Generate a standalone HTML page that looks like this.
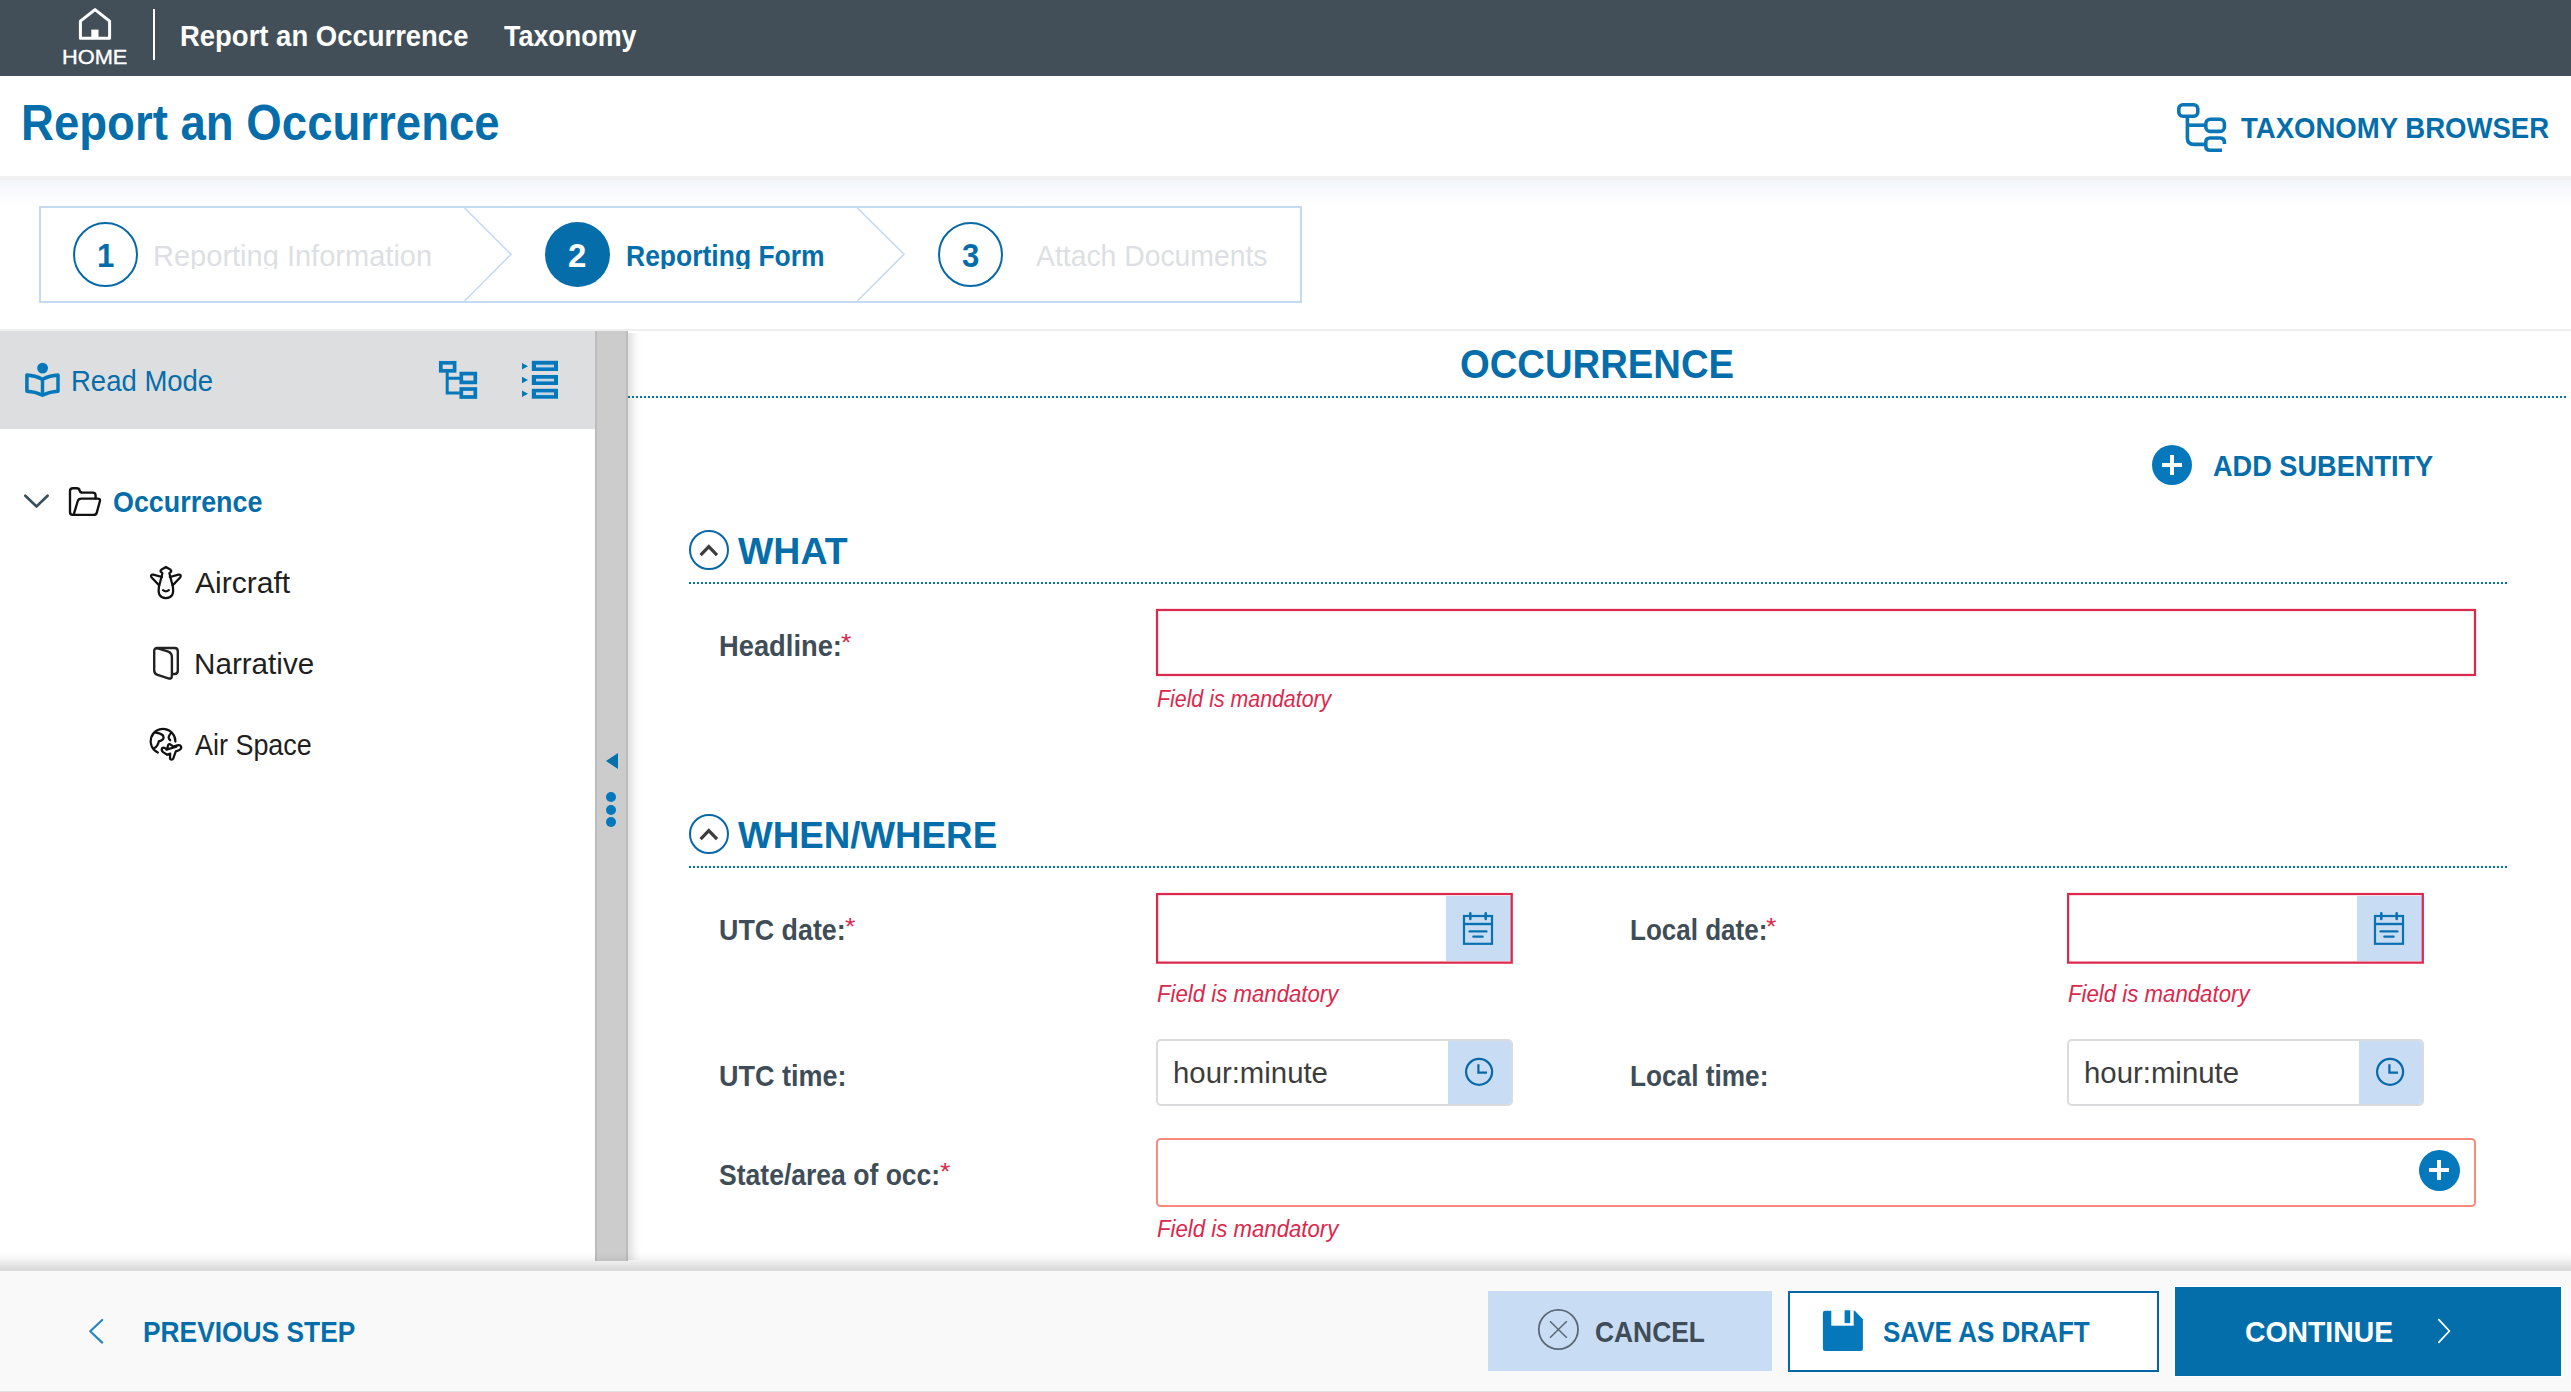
<!DOCTYPE html>
<html lang="en"><head><meta charset="utf-8"><title>Report an Occurrence</title>
<style>
html,body{margin:0;padding:0;}
body{width:2571px;height:1392px;overflow:hidden;background:#fff;position:relative;font-family:"Liberation Sans",sans-serif;}
.a{position:absolute;box-sizing:border-box;}
.t{position:absolute;white-space:nowrap;line-height:1;transform-origin:0 0;display:block;font-family:"Liberation Sans",sans-serif;}
svg{position:absolute;left:0;top:0;overflow:visible;}
.dot{position:absolute;height:2px;background-image:linear-gradient(90deg,#0670ab 0,#0670ab 2px,transparent 2px,transparent 4px);background-size:4px 2px;}

</style></head>
<body>
<!-- nav -->
<div class="a" style="left:0;top:0;width:2571px;height:75.5px;background:#424f59;"></div>
<div class="a" style="left:153px;top:9px;width:2.3px;height:51px;background:#fff;"></div>
<!-- title bar shadow -->
<div class="a" style="left:0;top:176px;width:2571px;height:4px;background:#f1f1f1;"></div>
<div class="a" style="left:0;top:180px;width:2571px;height:26px;background:linear-gradient(#f2f6fb,#fff);"></div>
<!-- stepper -->
<div class="a" style="left:39px;top:206px;width:1263px;height:97px;border:2px solid #c3daf1;background:#fff;"></div>
<div class="a" style="left:73px;top:222px;width:65px;height:65px;border-radius:50%;border:2.4px solid #0668a6;"></div>
<div class="a" style="left:544.5px;top:222px;width:65px;height:65px;border-radius:50%;background:#056eaa;"></div>
<div class="a" style="left:938px;top:222px;width:65px;height:65px;border-radius:50%;border:2.4px solid #0668a6;"></div>
<!-- separator line -->
<div class="a" style="left:0;top:329px;width:2571px;height:2px;background:#efefef;"></div>
<!-- left panel -->
<div class="a" style="left:0;top:331px;width:595px;height:97.5px;background:#dddee0;"></div>
<!-- splitter -->
<div class="a" style="left:595px;top:331px;width:33px;height:929.5px;background:#cccccc;border-left:2px solid #bcbcbc;border-right:2px solid #bcbcbc;"></div>
<div class="a" style="left:628px;top:333px;width:14px;height:927px;background:linear-gradient(90deg,rgba(0,0,0,.105),rgba(0,0,0,.09) 18%,rgba(0,0,0,.04) 50%,rgba(0,0,0,.012) 75%,rgba(0,0,0,0));"></div>
<div class="a" style="left:606px;top:792.4px;width:10px;height:10px;border-radius:50%;background:#0478ba;"></div>
<div class="a" style="left:606px;top:804.8px;width:10px;height:10px;border-radius:50%;background:#0478ba;"></div>
<div class="a" style="left:606px;top:817.2px;width:10px;height:10px;border-radius:50%;background:#0478ba;"></div>
<!-- dotted lines -->
<div class="dot" style="left:628px;top:395.7px;width:1939px;"></div>
<div class="dot" style="left:689px;top:582px;width:1818px;"></div>
<div class="dot" style="left:689px;top:866px;width:1818px;"></div>
<!-- section circles -->
<div class="a" style="left:689px;top:530px;width:40px;height:40px;border-radius:50%;border:2px solid #0668a6;"></div>
<div class="a" style="left:689px;top:814px;width:40px;height:40px;border-radius:50%;border:2px solid #0668a6;"></div>
<!-- plus circles -->
<div class="a" style="left:2152px;top:445px;width:40px;height:40px;border-radius:50%;background:#0478ba;"></div>
<div class="a" style="left:2162px;top:463px;width:20px;height:4px;background:#fff;"></div>
<div class="a" style="left:2170px;top:455px;width:4px;height:20px;background:#fff;"></div>
<!-- inputs -->


<div class="a" style="left:1446px;top:896px;width:65px;height:65px;background:#c8dcf3;"></div>

<div class="a" style="left:2357px;top:896px;width:65px;height:65px;background:#c8dcf3;"></div>
<div class="a" style="left:1156px;top:1039px;width:357px;height:67px;border:2px solid #d9dbdd;border-radius:5px;background:#fff;"></div>
<div class="a" style="left:1448px;top:1041px;width:63px;height:63px;background:#c8dcf3;border-radius:0 3px 3px 0;"></div>
<div class="a" style="left:2067px;top:1039px;width:357px;height:67px;border:2px solid #d9dbdd;border-radius:5px;background:#fff;"></div>
<div class="a" style="left:2359px;top:1041px;width:63px;height:63px;background:#c8dcf3;border-radius:0 3px 3px 0;"></div>
<div class="a" style="left:1156px;top:1138px;width:1320px;height:69px;border:2px solid #f98a7b;border-radius:4.5px;background:#fff;"></div>
<div class="a" style="left:2418.7px;top:1149.6px;width:41.4px;height:41.4px;border-radius:50%;background:#0478ba;"></div>
<div class="a" style="left:2429.4px;top:1168.3px;width:20px;height:4px;background:#fff;"></div>
<div class="a" style="left:2437.4px;top:1160.3px;width:4px;height:20px;background:#fff;"></div>
<!-- footer -->
<div class="a" style="left:0;top:1251px;width:2571px;height:17px;background:linear-gradient(rgba(0,0,0,0),rgba(0,0,0,.012) 25%,rgba(0,0,0,.05) 53%,rgba(0,0,0,.10) 82%,rgba(0,0,0,.137));"></div>
<div class="a" style="left:0;top:1268px;width:2571px;height:3px;background:#dcdcdc;"></div>
<div class="a" style="left:0;top:1271px;width:2571px;height:121px;background:#f9f9f9;border-bottom:1px solid #e2e2e2;"></div>
<div class="a" style="left:1488px;top:1291px;width:284px;height:80px;background:#c8dcf3;"></div>
<div class="a" style="left:1788px;top:1291px;width:370.5px;height:81px;border:2.5px solid #0566a6;background:#fff;"></div>
<div class="a" style="left:2175px;top:1287px;width:386px;height:88.5px;background:#046eaa;outline:1px solid #fff;"></div>

<svg width="2571" height="1392" viewBox="0 0 2571 1392" fill="none">
<!-- home -->
<g stroke="#fff" stroke-width="3" stroke-linejoin="round" stroke-linecap="round">
<path d="M80.4 21.2 L95 9.6 L109.6 21.2 V38.2 H80.4 Z"/>
</g>
<rect x="91.3" y="29.6" width="7.2" height="9" fill="#fff"/>
<!-- taxonomy browser icon -->
<g stroke="#0a76b6" stroke-width="3.6" stroke-linecap="butt" stroke-linejoin="round">
<rect x="2178.8" y="104.8" width="19" height="11.4" rx="4"/>
<rect x="2205.8" y="119.2" width="18.6" height="12.2" rx="4.5"/>
<path d="M2187.4 118 V138 Q2187.4 144.4 2194 144.4 H2205"/>
<path d="M2187.4 125.2 H2205"/>
<path d="M2224.4 144 V142.5 Q2224.4 138 2220 138 H2210 Q2205.8 138 2205.8 142.5 V145.7 Q2205.8 150.2 2210 150.2 H2222"/>
</g>
<!-- read mode icon -->
<circle cx="42.6" cy="368.1" r="5.4" fill="#0478ba"/>
<g stroke="#0478ba" stroke-width="3.5" stroke-linejoin="round">
<path d="M42.5 379.2 Q35 375.3 26.9 375 V391.3 Q35 391.6 42.5 395.3 Q50 391.6 58 391.3 V375 Q50 375.3 42.5 379.2 Z"/>
<path d="M42.5 379.2 V395.3"/>
</g>
<!-- tree icon -->
<g stroke="#0478ba" stroke-width="3.7">
<rect x="440.8" y="362.8" width="13.8" height="8"/>
<rect x="461.3" y="373.6" width="14" height="8.8"/>
<rect x="461.3" y="389" width="14" height="8"/>
<path d="M447.2 372 V393 H461 M447.2 378.3 H461" stroke-width="3"/>
</g>
<!-- list icon -->
<g fill="#0478ba">
<rect x="531.8" y="360.8" width="26.2" height="10.2"/>
<rect x="531.8" y="375" width="26.2" height="10"/>
<rect x="531.8" y="388.8" width="26.2" height="9.9"/>
</g>
<g fill="#c3d6e5">
<rect x="536" y="364.7" width="18" height="2.7"/>
<rect x="536" y="378.7" width="18" height="2.7"/>
<rect x="536" y="392.4" width="18" height="2.7"/>
</g>
<g fill="#0478ba">
<path d="M522 363 L528 366.2 L522 369.4Z M522 376.8 L528 380 L522 383.2Z M522 390.6 L528 393.8 L522 397Z"/>
</g>
<!-- chevron down -->
<path d="M25.3 495.8 L36.5 506.5 L47.6 495.8" stroke="#3a4f5c" stroke-width="2.7" stroke-linecap="round" stroke-linejoin="miter"/>
<!-- folder -->
<g stroke="#111" stroke-width="2.35" stroke-linejoin="round" stroke-linecap="round">
<path d="M73.6 514.9 H72.8 Q70 514.9 70 512 V491 Q70 488.2 72.8 488.2 H76.5 Q79.3 488.2 79.6 490.5 Q79.9 492.6 82.5 492.6 H92.8 Q95.6 492.6 95.6 495.4 V498.4"/>
<path d="M73.6 514.9 L77.8 501 Q78.6 498.6 81.2 498.6 H97.6 Q100.6 498.6 99.8 501.5 L96.8 512.6 Q96.2 514.9 93.6 514.9 Z"/>
</g>
<!-- aircraft -->
<g stroke="#111" stroke-width="2.25" stroke-linejoin="round" stroke-linecap="round">
<path d="M165.9 567 L170.6 569.8 Q172 570.8 170.6 572.2 L169.4 573.2 L172.8 586.5 Q174.8 598 165.9 598 Q157 598 159 586.5 L162.4 573.2 L161.2 572.2 Q159.8 570.8 161.2 569.8 Z"/>
<path d="M162 577 L153.2 574.6 Q150.2 574.2 151.4 577.2 L159.2 585.4"/>
<path d="M169.8 577 L178.6 574.6 Q181.6 574.2 180.4 577.2 L172.6 585.4"/>
<path d="M163 590.2 Q165.9 592.4 168.8 590.2"/>
</g>
<!-- narrative -->
<g stroke="#222" stroke-width="2.4" stroke-linejoin="round" stroke-linecap="round">
<path d="M156.5 648 H174.6 Q177.8 648 177.8 651.2 V670.8 Q177.8 674 174.6 674 H172.2"/>
<path d="M154.2 651.2 Q154.2 647.6 157.6 648.4 L167.6 651.4 Q171.9 652.8 171.9 657.2 V675.6 Q171.9 679.4 168.4 678.3 L157.6 674.8 Q154.2 673.6 154.2 670.4 Z"/>
</g>
<!-- air space -->
<g stroke="#111" stroke-width="2.25" stroke-linejoin="round" stroke-linecap="round">
<path d="M175.4 741.6 A12.4 12.4 0 1 0 157.8 752.6"/>
<path d="M154.8 732.4 Q160 733 162.6 735 Q165 738.4 161.6 740.4 L158.8 741.4 Q157.6 746.4 154.4 748"/>
<path d="M171.2 733 Q167.8 736.4 169 738.8 L170.2 740.2"/>
<path d="M162 748.4 Q163.4 747 165 748.2 L167.2 749 L168 745.4 Q169.2 743.2 171 744.8 L173.4 746.6 L177.2 745.4 Q180.4 744.6 181.2 746.8 Q181.6 749.2 179 750.2 L175.8 751.4 L173.2 758.6 Q171.8 760.6 170 758.8 L170.2 753.6 L167.2 754.8 L163.4 752.4 Q161 750.4 162 748.4 Z"/>
<path d="M166.4 749.6 L176.4 746.6"/>
</g>
<!-- splitter arrow -->
<path d="M606 761 L618 753 V769 Z" fill="#0670ab"/>
<!-- section chevrons -->
<g stroke="#3d3d3d" stroke-width="3.2" stroke-linecap="butt" stroke-linejoin="miter">
<path d="M700.6 555.2 L708.8 546.6 L717 555.2"/>
<path d="M700.6 839.2 L708.8 830.6 L717 839.2"/>
</g>
<!-- red input borders -->
<g stroke="#db2a4e" stroke-width="2.25">
<rect x="1157.03" y="609.98" width="1317.95" height="65"/>
<rect x="1157.1" y="894.03" width="354.6" height="68.6"/>
<rect x="2068.1" y="894.03" width="354.7" height="68.6"/>
</g>
<!-- calendars -->
<g id="cal" stroke="#0a72b2" stroke-width="2.2" stroke-linecap="round">
<rect x="1464" y="916" width="28" height="27.8" stroke-linejoin="miter"/>
<path d="M1464 924 H1492" stroke-linecap="butt" stroke-width="2.4"/>
<path d="M1470.3 913.4 V919 M1485.7 913.4 V919" stroke-width="2.6"/>
<path d="M1469.6 931.4 H1486.4 M1473.4 936.6 H1482.6" stroke-width="2.4"/>
</g>
<use href="#cal" x="911" y="0"/>
<!-- clocks -->
<g id="clk" stroke="#0669a9" stroke-width="2.2">
<circle cx="1479.1" cy="1071.8" r="13"/>
<path d="M1478.4 1064.2 V1072.6 H1487"/>
</g>
<use href="#clk" x="911" y="0"/>
<!-- previous chevron -->
<path d="M102.2 1320 L90.2 1331.3 L102.2 1342.6" stroke="#2a84c0" stroke-width="2.2" stroke-linecap="round" stroke-linejoin="round"/>
<!-- cancel icon -->
<g stroke="#5a6874" stroke-width="1.8">
<circle cx="1558.4" cy="1329.5" r="19.6"/>
<path d="M1550 1321.3 L1566.8 1337.7 M1566.8 1321.3 L1550 1337.7" stroke-width="1.5"/>
</g>
<!-- floppy -->
<path d="M1825 1310.8 H1854.8 L1862.9 1319.2 V1348.8 Q1862.9 1351 1860.7 1351 H1825 Q1822.9 1351 1822.9 1348.8 V1313 Q1822.9 1310.8 1825 1310.8 Z" fill="#0478ba"/>
<rect x="1831.3" y="1310.3" width="22.4" height="15.4" fill="#fff"/>
<rect x="1844.6" y="1310.3" width="5.6" height="12.8" fill="#0478ba"/>
<!-- continue chevron -->
<path d="M2438.8 1319.6 L2449.4 1331 L2438.8 1342.4" stroke="#fff" stroke-width="1.8" stroke-linecap="round" stroke-linejoin="round"/>
<!-- stepper chevrons -->
<g stroke="#c4dbf1" stroke-width="1.6">
<path d="M464.6 208 L511 254.3 L464.6 301"/>
<path d="M857.4 208 L904 254.3 L857.4 301"/>
</g>
</svg>


<!-- text layer -->
<span class="t" style="left:62.24px;top:45px;line-height:23px;font-size:21px;color:#fff;transform:scaleX(1.0381);-webkit-text-stroke:0.35px #fff;">HOME</span>
<span class="t" style="left:180.28px;top:19px;line-height:33px;font-size:30px;color:#fff;transform:scaleX(0.9153);font-weight:700;">Report an Occurrence</span>
<span class="t" style="left:504.00px;top:19px;line-height:33px;font-size:30px;color:#fff;transform:scaleX(0.8967);font-weight:700;">Taxonomy</span>
<span class="t" style="left:20.95px;top:95px;line-height:56px;font-size:50px;color:#056eaa;transform:scaleX(0.9115);font-weight:700;">Report an Occurrence</span>
<span class="t" style="left:2240.70px;top:111px;line-height:33px;font-size:30px;color:#056eaa;transform:scaleX(0.9182);font-weight:700;">TAXONOMY BROWSER</span>
<span class="t" style="left:97.05px;top:237px;line-height:37px;font-size:33px;color:#056eaa;transform:scaleX(0.9438);font-weight:700;">1</span>
<span class="t" style="left:153.13px;top:239px;line-height:33px;font-size:30px;color:#dcdfe3;transform:scaleX(0.9675);height:29.6px;overflow:hidden;">Reporting Information</span>
<span class="t" style="left:567.97px;top:237px;line-height:37px;font-size:33px;color:#fff;transform:scaleX(1.0000);font-weight:700;">2</span>
<span class="t" style="left:626.04px;top:239px;line-height:33px;font-size:30px;color:#056eaa;transform:scaleX(0.8830);font-weight:700;height:29.6px;overflow:hidden;">Reporting Form</span>
<span class="t" style="left:962.02px;top:237px;line-height:37px;font-size:33px;color:#056eaa;transform:scaleX(0.9403);font-weight:700;">3</span>
<span class="t" style="left:1036.00px;top:239px;line-height:33px;font-size:30px;color:#dcdfe3;transform:scaleX(0.9444);height:29.6px;overflow:hidden;">Attach Documents</span>
<span class="t" style="left:70.55px;top:364px;line-height:33px;font-size:30px;color:#056eaa;transform:scaleX(0.9166);">Read Mode</span>
<span class="t" style="left:113.16px;top:485px;line-height:33px;font-size:29.5px;color:#056eaa;transform:scaleX(0.9112);font-weight:700;">Occurrence</span>
<span class="t" style="left:195.00px;top:566px;line-height:33px;font-size:29.5px;color:#1f1f1f;transform:scaleX(1.0190);">Aircraft</span>
<span class="t" style="left:194.08px;top:647px;line-height:33px;font-size:29.5px;color:#1f1f1f;transform:scaleX(1.0046);">Narrative</span>
<span class="t" style="left:195.00px;top:728px;line-height:33px;font-size:29.5px;color:#1f1f1f;transform:scaleX(0.9132);">Air Space</span>
<span class="t" style="left:1460.30px;top:342px;line-height:44px;font-size:39.8px;color:#056eaa;transform:scaleX(0.9609);font-weight:700;">OCCURRENCE</span>
<span class="t" style="left:2212.58px;top:449px;line-height:33px;font-size:30px;color:#056eaa;transform:scaleX(0.9050);font-weight:700;">ADD SUBENTITY</span>
<span class="t" style="left:738.00px;top:530px;line-height:42px;font-size:37.6px;color:#056eaa;transform:scaleX(0.9971);font-weight:700;">WHAT</span>
<span class="t" style="left:718.69px;top:629px;line-height:33px;font-size:30px;color:#3f4d58;transform:scaleX(0.9107);font-weight:700;">Headline:</span>
<span class="t" style="left:841.35px;top:630px;line-height:26px;font-size:23px;color:#da284c;transform:scaleX(1.1566);">*</span>
<span class="t" style="left:1157.36px;top:686px;line-height:26px;font-size:23.5px;color:#da284c;transform:scaleX(0.9078);font-style:italic;">Field is mandatory</span>
<span class="t" style="left:737.70px;top:814px;line-height:42px;font-size:37.6px;color:#056eaa;transform:scaleX(0.9774);font-weight:700;">WHEN/WHERE</span>
<span class="t" style="left:719.04px;top:913px;line-height:33px;font-size:30px;color:#3f4d58;transform:scaleX(0.8943);font-weight:700;">UTC date:</span>
<span class="t" style="left:844.85px;top:914px;line-height:26px;font-size:23px;color:#da284c;transform:scaleX(1.1566);">*</span>
<span class="t" style="left:1630.07px;top:913px;line-height:33px;font-size:30px;color:#3f4d58;transform:scaleX(0.8669);font-weight:700;">Local date:</span>
<span class="t" style="left:1766.35px;top:914px;line-height:26px;font-size:23px;color:#da284c;transform:scaleX(1.1566);">*</span>
<span class="t" style="left:1157.37px;top:980px;line-height:27px;font-size:24.5px;color:#da284c;transform:scaleX(0.9058);font-style:italic;">Field is mandatory</span>
<span class="t" style="left:2068.37px;top:980px;line-height:27px;font-size:24.5px;color:#da284c;transform:scaleX(0.9068);font-style:italic;">Field is mandatory</span>
<span class="t" style="left:719.04px;top:1059px;line-height:33px;font-size:30px;color:#3f4d58;transform:scaleX(0.8993);font-weight:700;">UTC time:</span>
<span class="t" style="left:1630.06px;top:1059px;line-height:33px;font-size:30px;color:#3f4d58;transform:scaleX(0.8740);font-weight:700;">Local time:</span>
<span class="t" style="left:1173.37px;top:1057px;line-height:32px;font-size:29px;color:#3d3d3d;transform:scaleX(1.0116);">hour:minute</span>
<span class="t" style="left:2084.37px;top:1057px;line-height:32px;font-size:29px;color:#3d3d3d;transform:scaleX(1.0123);">hour:minute</span>
<span class="t" style="left:718.99px;top:1158px;line-height:33px;font-size:30px;color:#3f4d58;transform:scaleX(0.8845);font-weight:700;">State/area of occ:</span>
<span class="t" style="left:939.85px;top:1159px;line-height:26px;font-size:23px;color:#da284c;transform:scaleX(1.1566);">*</span>
<span class="t" style="left:1157.37px;top:1215px;line-height:27px;font-size:24.5px;color:#da284c;transform:scaleX(0.9058);font-style:italic;">Field is mandatory</span>
<span class="t" style="left:143.05px;top:1315px;line-height:33px;font-size:30px;color:#056eaa;transform:scaleX(0.8784);font-weight:700;">PREVIOUS STEP</span>
<span class="t" style="left:1594.98px;top:1315px;line-height:33px;font-size:30px;color:#3f4d58;transform:scaleX(0.8798);font-weight:700;">CANCEL</span>
<span class="t" style="left:1883.39px;top:1315px;line-height:33px;font-size:30px;color:#056eaa;transform:scaleX(0.8671);font-weight:700;">SAVE AS DRAFT</span>
<span class="t" style="left:2244.61px;top:1315px;line-height:33px;font-size:30px;color:#fff;transform:scaleX(0.9455);font-weight:700;">CONTINUE</span>
</body></html>
